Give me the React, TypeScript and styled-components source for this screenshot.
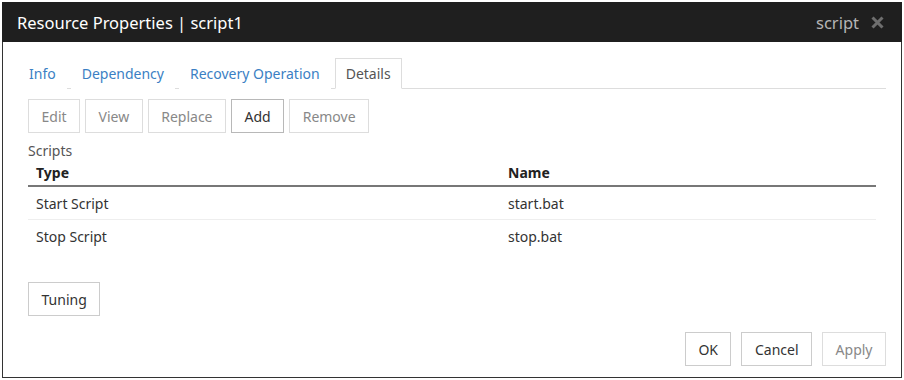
import React from "react";
import styled, { createGlobalStyle } from "styled-components";

const Global = createGlobalStyle`
  html, body { margin: 0; padding: 0; background: #ffffff; }
  body { font-family: "Noto Sans", "Open Sans", sans-serif; }
  * { box-sizing: border-box; }
`;

const Page = styled.div`
  padding: 2px 0 0 2px;
  width: 904px;
  height: 380px;
`;

const Dialog = styled.div`
  width: 900px;
  height: 376px;
  border: 1px solid #333;
  border-top: none;
  display: flex;
  flex-direction: column;
  background: #fff;
`;

const TitleBar = styled.div`
  height: 40px;
  background: #1f1f1f;
  display: flex;
  align-items: center;
  justify-content: space-between;
  padding: 0 18px 0 15px;
  margin: 0 -1px;
`;

const Title = styled.div`
  color: #ffffff;
  font-size: 16.5px;
`;

const TitleRight = styled.div`
  display: flex;
  align-items: center;
  gap: 12px;
  color: #b5b5b5;
  font-size: 16.5px;
`;

const Body = styled.div`
  flex: 1;
  display: flex;
  flex-direction: column;
  padding: 16px 15px 11px 15px;
`;

const Tabs = styled.div`
  display: flex;
  gap: 4px;
  border-bottom: 1px solid #dddddd;
  height: 31px;
`;

const Tab = styled.div<{ $active?: boolean }>`
  height: 31px;
  padding: 0 10px;
  display: flex;
  align-items: center;
  font-size: 14px;
  color: ${(p) => (p.$active ? "#555" : "#3b7fc4")};
  border: 1px solid ${(p) => (p.$active ? "#dddddd" : "transparent")};
  border-bottom-color: ${(p) => (p.$active ? "#fff" : "transparent")};
  background: #fff;
`;

const Content = styled.div`
  flex: 1;
  display: flex;
  flex-direction: column;
  padding: 10px 10px 0 10px;
`;

const Toolbar = styled.div`
  display: flex;
  gap: 5px;
`;

const Button = styled.button<{ $enabled?: boolean; $strong?: boolean }>`
  height: 34px;
  padding: 0 12.5px;
  font-family: inherit;
  font-size: 14px;
  background: #fff;
  color: ${(p) => (p.$enabled ? "#333" : "#888")};
  border: 1px solid ${(p) => (p.$strong ? "#b8b8b8" : p.$enabled ? "#cccccc" : "#dddddd")};
  border-radius: 0;
`;

const Label = styled.div`
  margin-top: 9px;
  font-size: 14px;
  color: #555;
  line-height: 18px;
`;

const Table = styled.div`
  display: flex;
  flex-direction: column;
  width: 848px;
`;

const Row = styled.div<{ $head?: boolean }>`
  display: grid;
  grid-template-columns: 472px 1fr;
  height: ${(p) => (p.$head ? "27px" : "33px")};
  align-items: center;
  padding-left: 8px;
  font-size: 14px;
  font-weight: ${(p) => (p.$head ? 700 : 400)};
  color: ${(p) => (p.$head ? "#222" : "#333")};
  border-bottom: ${(p) => (p.$head ? "2px solid #777" : "1px solid #eeeeee")};
  &:last-child { border-bottom: none; }
`;

const Spacer = styled.div`
  flex: 1;
`;

const Footer = styled.div`
  display: flex;
  justify-content: flex-end;
  gap: 10px;
  margin-right: -10px;
`;

const TuningWrap = styled.div`
  margin-top: 29px;
`;

const CloseIcon = () => (
  <svg width="13" height="13" viewBox="0 0 13 13">
    <path d="M1.5 1.5 L11.5 11.5 M11.5 1.5 L1.5 11.5" stroke="#6e6e6e" strokeWidth="3" />
  </svg>
);

export default function App() {
  return (
    <Page>
      <Global />
      <Dialog>
        <TitleBar>
          <Title>Resource Properties | script1</Title>
          <TitleRight>
            <span>script</span>
            <CloseIcon />
          </TitleRight>
        </TitleBar>
        <Body>
          <Tabs>
            <Tab>Info</Tab>
            <Tab>Dependency</Tab>
            <Tab>Recovery Operation</Tab>
            <Tab $active>Details</Tab>
          </Tabs>
          <Content>
            <Toolbar>
              <Button>Edit</Button>
              <Button>View</Button>
              <Button>Replace</Button>
              <Button $enabled $strong>Add</Button>
              <Button>Remove</Button>
            </Toolbar>
            <Label>Scripts</Label>
            <Table>
              <Row $head>
                <span>Type</span>
                <span>Name</span>
              </Row>
              <Row>
                <span>Start Script</span>
                <span>start.bat</span>
              </Row>
              <Row>
                <span>Stop Script</span>
                <span>stop.bat</span>
              </Row>
            </Table>
            <TuningWrap>
              <Button $enabled>Tuning</Button>
            </TuningWrap>
            <Spacer />
            <Footer>
              <Button $enabled>OK</Button>
              <Button $enabled>Cancel</Button>
              <Button>Apply</Button>
            </Footer>
          </Content>
        </Body>
      </Dialog>
    </Page>
  );
}
